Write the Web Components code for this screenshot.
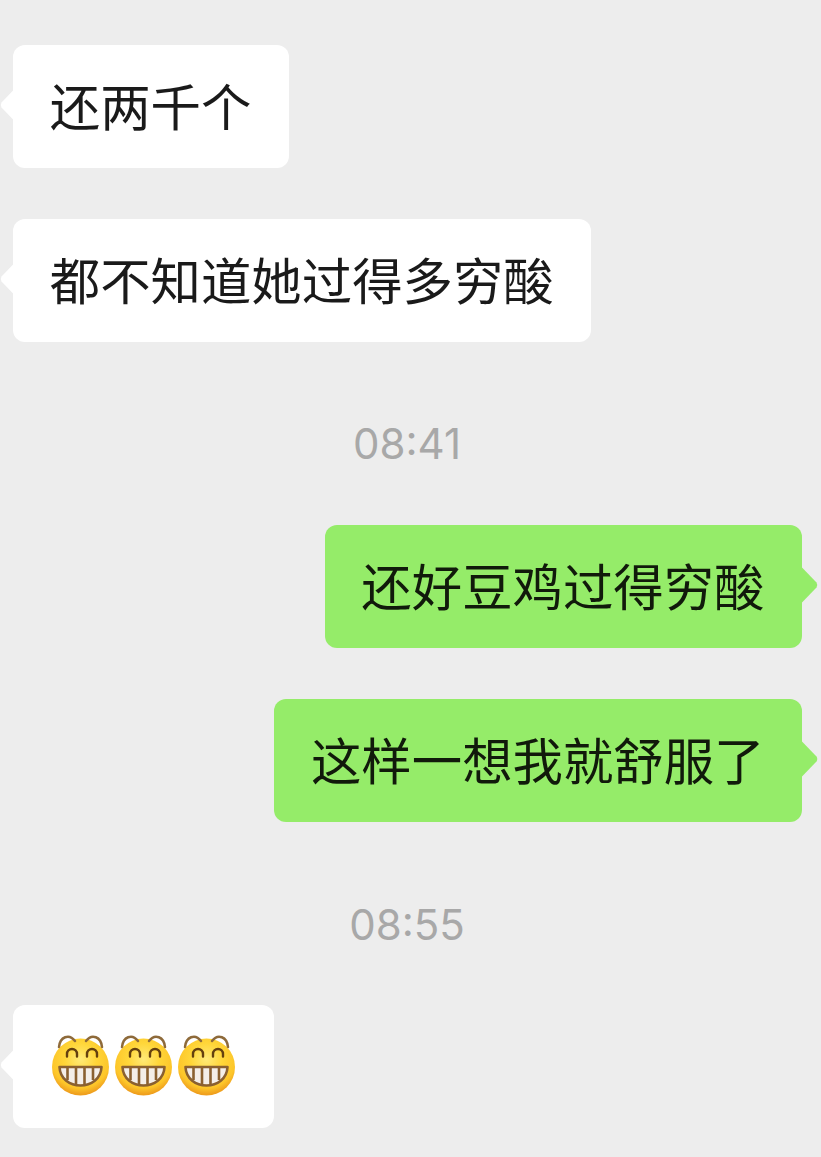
<!DOCTYPE html>
<html lang="zh">
<head>
<meta charset="utf-8">
<title>chat</title>
<style>
html, body { margin: 0; background: #ededed; }
body { font-family: "Noto Sans CJK SC", "Noto Sans", sans-serif; }
</style>
</head>
<body>
<chat-log>
    <chat-bubble side="left" style="margin-top:45px">还两千个</chat-bubble>
    <chat-bubble side="left" style="margin-top:51px">都不知道她过得多穷酸</chat-bubble>
    <chat-time style="margin-top:72px">08:41</chat-time>
    <chat-bubble side="right" style="margin-top:51px">还好豆鸡过得穷酸</chat-bubble>
    <chat-bubble side="right" style="margin-top:51px">这样一想我就舒服了</chat-bubble>
    <chat-time style="margin-top:73px">08:55</chat-time>
    <chat-bubble side="left" style="margin-top:50px;padding:0 35px 0 37px"><grin-emoji></grin-emoji><grin-emoji></grin-emoji><grin-emoji></grin-emoji></chat-bubble>
</chat-log>
<script>
class chatLog extends HTMLElement {
    constructor() {
        super();
        this.shadowDOM = this.attachShadow({mode: 'open'});
    }
    connectedCallback() {
        this.shadowDOM.innerHTML = `
            <style>
            :host {
                display: flex;
                flex-direction: column;
                height: 1157px;
                box-sizing: border-box;
                padding: 0 19px 0 13px;
                overflow: hidden;
            }
            </style>
            <slot></slot>
            `;
    }
}

class chatBubble extends HTMLElement {
    constructor() {
        super();
        this.shadowDOM = this.attachShadow({mode: 'open'});
    }
    connectedCallback() {
        this.shadowDOM.innerHTML = `
            <style>
            :host {
                position: relative;
                display: flex;
                align-items: center;
                box-sizing: border-box;
                height: 123px;
                width: max-content;
                padding: 0 37.500px 3px 36.800px;
                border-radius: 12px;
                background: #fff;
                color: #1a1a1a;
                font-size: 50.400px;
                line-height: 1;
                white-space: nowrap;
            }
            :host([side="right"]) {
                align-self: flex-end;
                background: #95ec69;
                color: #111a0b;
            }
            svg {
                position: absolute;
                top: 42px;
                width: 16px;
                height: 36px;
                fill: #fff;
            }
            :host([side="left"]) svg { left: -13px; }
            :host([side="right"]) svg { right: -16px; fill: #95ec69; transform: scaleX(-1); }
            </style>
            <svg viewBox="0 0 16 36"><path d="M16 0.500L1.500 15.500Q0 18 1.500 20.500L16 35.500Z"/></svg>
            <slot></slot>
            `;
    }
}

class chatTime extends HTMLElement {
    constructor() {
        super();
        this.shadowDOM = this.attachShadow({mode: 'open'});
    }
    connectedCallback() {
        this.shadowDOM.innerHTML = `
            <style>
            :host {
                display: block;
                height: 60px;
                line-height: 60px;
                margin-right: 1px;
                text-align: center;
                color: #a8a8a8;
                font-family: Inter, "Liberation Sans", sans-serif;
                font-size: 42px;
                font-weight: 400;
            }
            </style>
            <slot></slot>
            `;
    }
}

let grinCount = 0;
class grinEmoji extends HTMLElement {
    constructor() {
        super();
        this.shadowDOM = this.attachShadow({mode: 'open'});
    }
    connectedCallback() {
        const id = 'face' + (grinCount++);
        this.shadowDOM.innerHTML = `
            <style>
            :host {
                display: block;
                width: 63px;
                height: 70px;
                margin-bottom: 3px;
            }
            svg { display: block; margin-left: -10.500px; }
            </style>
            <svg width="80" height="70" viewBox="0 0 80 70" fill="none" stroke-linecap="round">
                <defs>
                    <radialGradient id="${id}" cx="50%" cy="36%" r="62%">
                        <stop offset="0" stop-color="#ffea78"/>
                        <stop offset=".45" stop-color="#ffd639"/>
                        <stop offset=".82" stop-color="#fdc62a"/>
                        <stop offset="1" stop-color="#ef9f1e"/>
                    </radialGradient>
                </defs>
                <circle cx="40.500" cy="37" r="28.500" fill="url(#${id})"/>
                <path d="M19 17C20 7 29 3 35 11" stroke="#8e6a3a" stroke-width="2.500"/>
                <path d="M46 11C52 3 61 7 62 17" stroke="#8e6a3a" stroke-width="2.500"/>
                <path d="M27 26.500v-2.500a5 5 0 0 1 10 0v2.500" stroke="#64400f" stroke-width="2.400"/>
                <path d="M47 26.500v-2.500a5 5 0 0 1 10 0v2.500" stroke="#64400f" stroke-width="2.400"/>
                <path d="M19.500 37H61.500C61 49 51 55.500 40.500 55.500C30 55.500 20 49 19.500 37Z" fill="#f4eee8" stroke="#8a6030" stroke-width="2.600" stroke-linejoin="round"/>
                <path d="M27.500 37V50M36 37V55M44.500 37V55M53 37V50" stroke="#8a6030" stroke-width="2.600" stroke-linecap="butt"/>
            </svg>
            `;
    }
}

customElements.define('chat-log', chatLog);
customElements.define('chat-bubble', chatBubble);
customElements.define('chat-time', chatTime);
customElements.define('grin-emoji', grinEmoji);
</script>
</body>
</html>
